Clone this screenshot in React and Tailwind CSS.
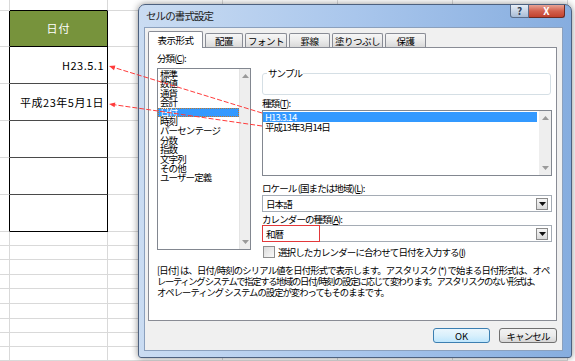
import React from 'react'

const grid = 'border-r border-b border-r-[#d9d9d9] border-b-[#d9d9d9]'
const txt = 'text-[9.5px] tracking-[-0.9px]'

const restCols = ['w-[115px]', 'w-[115px]', 'w-[115px]', 'w-[115px]']

const tableRows = [
  { h: 'h-[37px]', text: 'H23.5.1', last: false },
  { h: 'h-[37px]', text: '平成23年5月1日', last: false },
  { h: 'h-[37px]', text: '', last: false },
  { h: 'h-[37px]', text: '', last: false },
  { h: 'h-[37px]', text: '', last: true },
]

const lowerRows = ['h-[14px]', 'h-[14px]', 'h-[15px]', 'h-[14px]', 'h-[15px]', 'h-[15px]', 'h-[14px]', 'h-[14px]', 'h-[14px]']

const categories = ['標準', '数値', '通貨', '会計', '日付', '時刻', 'パーセンテージ', '分数', '指数', '文字列', 'その他', 'ユーザー定義']

const tabs = [
  { label: '表示形式', w: 'w-[55px]', active: true },
  { label: '配置', w: 'w-[38px]' },
  { label: 'フォント', w: 'w-[42px]' },
  { label: '罫線', w: 'w-[41px]' },
  { label: '塗りつぶし', w: 'w-[51px]' },
  { label: '保護', w: 'w-[41px]' },
]

const UpArrow = () => (
  <svg width="7" height="4" viewBox="0 0 7 4"><path d="M0 4 L3.5 0 L7 4 Z" fill="#9a9a9a" /></svg>
)
const DownArrow = ({ color = '#9a9a9a' }) => (
  <svg width="7" height="4" viewBox="0 0 7 4"><path d="M0 0 L7 0 L3.5 4 Z" fill={color} /></svg>
)

function RestCells() {
  return restCols.map((w, i) => <div key={i} className={`${w} shrink-0 ${grid}`} />)
}

function Sheet() {
  return (
    <div className="flex flex-col">
      {/* top row above the table */}
      <div className="flex h-[11px]">
        <div className={`w-[10px] shrink-0 ${grid}`} />
        <div className="w-[98px] shrink-0 border-r border-b border-r-[#d9d9d9] border-b-black" />
        <RestCells />
      </div>
      {/* header */}
      <div className="flex h-[36px]">
        <div className="w-[10px] shrink-0 border-r border-b border-r-black border-b-[#d9d9d9]" />
        <div className="w-[98px] shrink-0 border-r border-b border-r-black border-b-black bg-[#77933c] text-white text-[11px] tracking-[1px] flex items-center justify-center">
          日付
        </div>
        <RestCells />
      </div>
      {tableRows.map((r, i) => (
        <div key={i} className={`flex ${r.h}`}>
          <div className="w-[10px] shrink-0 border-r border-b border-r-black border-b-[#d9d9d9]" />
          <div
            className={`w-[98px] shrink-0 border-r border-b border-r-black ${r.last ? 'border-b-black' : 'border-b-[#4a4a4a]'} text-[11px] tracking-[0.5px] text-black flex items-center justify-end pr-[3px]`}
          >
            {r.text}
          </div>
          <RestCells />
        </div>
      ))}
      {lowerRows.map((h, i) => (
        <div key={i} className={`flex ${h}`}>
          <div className={`w-[10px] shrink-0 ${grid}`} />
          <div className={`w-[98px] shrink-0 ${grid}`} />
          <RestCells />
        </div>
      ))}
    </div>
  )
}

function Select({ value, marked }) {
  return (
    <div className="relative h-[17px] border border-[#a5acb5] bg-white flex items-center">
      <span className={`pl-[3px] ${txt} leading-[12px]`}>{value}</span>
      <div className="ml-auto mr-[3px] w-[12px] h-[12px] border border-[#8b8b8b] bg-linear-to-b from-[#f6f6f6] to-[#dadada] flex items-center justify-center">
        <DownArrow color="#111" />
      </div>
      {marked && <div className="absolute -left-px -top-px w-[58px] h-[17px] border border-[#e2383a]" />}
    </div>
  )
}

function Dialog() {
  return (
    <div className="absolute left-[138px] top-[4px] w-[434px] h-[354px] overflow-hidden rounded-t-[7px] rounded-b-[3px] border border-[#4d617f] bg-linear-to-r from-[#cadcf2] via-[#a9c6ec] to-[#86addf] shadow-[0_0_7px_rgba(0,0,0,0.45)] flex flex-col">
      {/* title bar */}
      <div className="h-[22px] flex items-start">
        <div className="pl-[7px] pt-[4px] text-[10.5px] tracking-[-0.9px] leading-[14px] text-[#1b1b1b]">セルの書式設定</div>
        <div className="ml-auto mr-[6px] flex">
          <div className="w-[19px] h-[13px] rounded-bl-[3px] border border-t-0 border-[#5a6d8a] bg-linear-to-b from-[#e6edf6] to-[#a8bcd6] flex items-center justify-center text-[10px] leading-[10px] font-bold text-[#2f3e55]">
            ?
          </div>
          <div className="w-[36px] h-[13px] rounded-br-[3px] border border-t-0 border-l-0 border-[#6b2a22] bg-linear-to-b from-[#e7a396] via-[#d2604d] to-[#c2412c] flex items-center justify-center text-[10px] leading-[10px] font-bold text-white">
            X
          </div>
        </div>
      </div>
      {/* client */}
      <div className="flex-1 pl-[5px] pr-[8px] pb-[6px] flex">
        <div className="flex-1 min-w-0 border border-[#8ba0bd] bg-[#f0f0f0] pt-[3px] pl-[3px] pr-[5px] flex flex-col text-black">
          {/* tabs */}
          <div className="h-[16px] flex items-end gap-[2px]">
            {tabs.map((t) =>
              t.active ? (
                <div key={t.label} className={`${t.w} h-[17px] -mb-px relative z-10 bg-white border border-b-0 border-[#898c95] rounded-t-[2px] text-[9.5px] tracking-[-0.5px] leading-[12px] flex items-center justify-center`}>
                  {t.label}
                </div>
              ) : (
                <div key={t.label} className={`${t.w} h-[14px] bg-linear-to-b from-[#f6f6f6] via-[#ebebeb] to-[#d9d9d9] border border-b-0 border-[#898c95] rounded-t-[2px] text-[9.5px] tracking-[-0.5px] leading-[12px] flex items-center justify-center`}>
                  {t.label}
                </div>
              )
            )}
          </div>
          {/* panel */}
          <div className="h-[274px] overflow-hidden border border-[#898c95] bg-white pl-[8px]">
            <div className="flex gap-[11px]">
              {/* category column */}
              <div className="w-[94px] shrink-0">
                <div className={`mt-[4px] ${txt} leading-[12px]`}>
                  分類(<u>C</u>):
                </div>
                <div className="mt-[4px] h-[182px] border border-[#828790] flex">
                  <div className="flex-1 pt-[1px]">
                    {categories.map((c) => (
                      <div
                        key={c}
                        className={`pl-[2px] ${txt} leading-[9.4px] h-[9.4px] whitespace-nowrap ${c === '日付' ? 'bg-[#3399ff] text-white outline-1 outline-dotted outline-[#c0762a] -outline-offset-1' : ''}`}
                      >
                        {c}
                      </div>
                    ))}
                  </div>
                  <div className="w-[11px] bg-[#eeeeee] border-l border-[#e4e4e4] flex flex-col items-center justify-between py-[5px]">
                    <UpArrow />
                    <DownArrow />
                  </div>
                </div>
              </div>
              {/* right column */}
              <div className="w-[290px] shrink-0">
                <div className="mt-[25px] relative h-[22px] w-[289px] border border-[#d5dfe5] rounded-[3px]">
                  <span className={`absolute left-[4px] top-[-7px] bg-white px-[1px] ${txt} leading-[12px]`}>サンプル</span>
                </div>
                <div className={`mt-[2px] ${txt} leading-[12px]`}>
                  種類(<u>T</u>):
                </div>
                <div className="mt-[1px] h-[66px] border border-[#828790] flex">
                  <div className="flex-1 mr-[2px] pt-[1px]">
                    <div className={`pl-[2px] h-[10px] ${txt} leading-[10px] bg-[#3399ff] text-white`}>H13.3.14</div>
                    <div className={`pl-[2px] h-[10px] ${txt} leading-[11px]`}>平成13年3月14日</div>
                  </div>
                  <div className="w-[12px] bg-[#eeeeee] flex flex-col items-center justify-between py-[5px]">
                    <UpArrow />
                    <DownArrow />
                  </div>
                </div>
                <div className={`mt-[6px] ${txt} leading-[12px]`}>
                  ロケール (国または地域)(<u>L</u>):
                </div>
                <div className="mt-[1px]">
                  <Select value="日本語" />
                </div>
                <div className={`mt-[2px] ${txt} leading-[11px]`}>
                  カレンダーの種類(<u>A</u>):
                </div>
                <Select value="和暦" marked />
                <div className="mt-[4px] h-[12px] flex items-center gap-[3px]">
                  <div className="ml-px w-[12px] h-[12px] border border-[#8f8f8f] bg-linear-to-br from-[#dadada] to-[#fafafa]" />
                  <span className={`${txt} leading-[12px]`}>
                    選択したカレンダーに合わせて日付を入力する(<u>I</u>)
                  </span>
                </div>
              </div>
            </div>
            <div className="mt-[7px] text-[9.3px] leading-[11px] whitespace-nowrap">
              <div className="tracking-[-0.8px]">
                [日付] は、日付/時刻のシリアル値を日付形式で表示します。アスタリスク (*) で始まる日付形式は、オペ
              </div>
              <div className="tracking-[-1.35px]">
                レーティング システムで指定する地域の日付/時刻の設定に応じて変わります。アスタリスクのない形式は、
              </div>
              <div className="tracking-[-0.95px]">
                オペレーティング システムの設定が変わってもそのままです。
              </div>
            </div>
          </div>
          {/* buttons */}
          <div className="mt-[7px] flex justify-end gap-[9px]">
            <button className="w-[57px] h-[15px] rounded-[3px] border border-[#3c7fb1] bg-linear-to-b from-[#eaf6fd] via-[#d9f0fc] to-[#bee6fd] text-[9.5px] leading-[12px] text-black">
              OK
            </button>
            <button className={`w-[58px] h-[15px] rounded-[3px] border border-[#707070] bg-linear-to-b from-[#f2f2f2] via-[#ebebeb] to-[#d6d6d6] ${txt} leading-[12px] text-black`}>
              キャンセル
            </button>
          </div>
        </div>
      </div>
    </div>
  )
}

export default function App() {
  return (
    <div className="relative w-[575px] h-[361px] overflow-hidden bg-white font-['Noto_Sans_CJK_JP',sans-serif]">
      <Sheet />
      <Dialog />
      {/* annotation arrows */}
      <svg className="absolute inset-0 pointer-events-none" width="575" height="361" viewBox="0 0 575 361">
        <line x1="262" y1="113" x2="114" y2="67.5" stroke="#ff3b3b" strokeWidth="1" strokeDasharray="5 2" />
        <polygon points="109,66 115.4,65.4 114,70.2" fill="#ff3b3b" />
        <line x1="262" y1="126" x2="114" y2="104.7" stroke="#ff3b3b" strokeWidth="1" strokeDasharray="5 2" />
        <polygon points="109,104 115.3,102.4 114.6,107.3" fill="#ff3b3b" />
      </svg>
    </div>
  )
}
